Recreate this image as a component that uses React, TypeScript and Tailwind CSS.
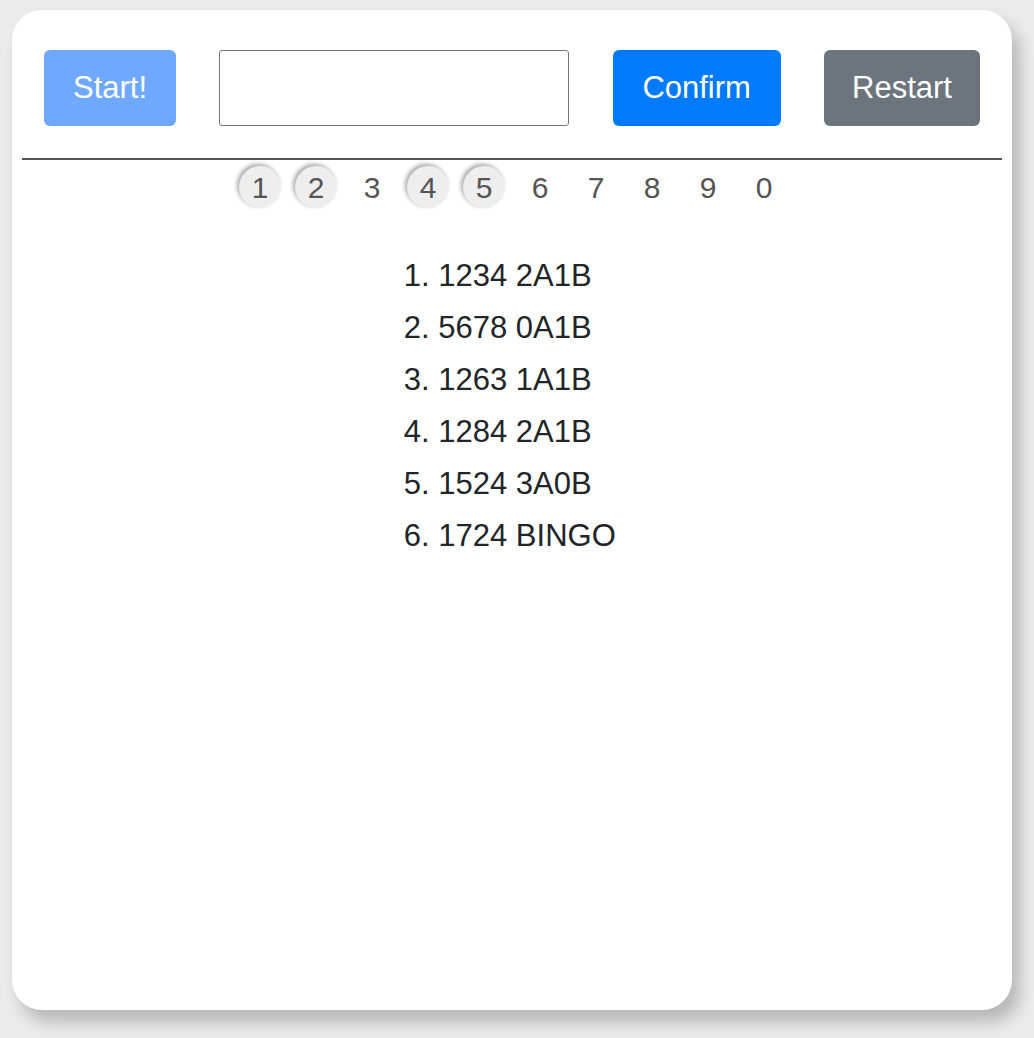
import React from "react";

const digits = ["1", "2", "3", "4", "5", "6", "7", "8", "9", "0"];
const used = ["1", "2", "4", "5"];

const guesses = [
    {num: "1234", result: "2A1B"},
    {num: "5678", result: "0A1B"},
    {num: "1263", result: "1A1B"},
    {num: "1284", result: "2A1B"},
    {num: "1524", result: "3A0B"},
    {num: "1724", result: "BINGO"},
];

const App: React.FC = () => {
    return (
        <div className="min-h-[1038px] w-full bg-[#ebebeb] pt-[10px] pl-[12px] font-['Liberation_Sans',Helvetica,Arial,sans-serif]">
            <div className="w-[1000px] h-[1000px] rounded-[30px] bg-white shadow-[8px_12px_16px_rgba(0,0,0,0.22)] pt-[40px]">
                <div className="flex items-center justify-between px-[32px]">
                    <button
                        disabled
                        className="w-[132px] h-[76px] rounded-[6px] bg-[#6fa8ff] text-white text-[31px]"
                    >
                        Start!
                    </button>
                    <input
                        type="text"
                        className="w-[350px] h-[76px] border border-[#767676] rounded-[3px] bg-white focus:outline-none"
                    />
                    <button className="w-[168px] h-[76px] rounded-[6px] bg-[#007bff] text-white text-[31px]">
                        Confirm
                    </button>
                    <button className="w-[156px] h-[76px] rounded-[6px] bg-[#6c757d] text-white text-[31px]">
                        Restart
                    </button>
                </div>
                <div className="mt-[32px] mx-[10px] h-[2px] bg-[#555]"/>
                <div className="mt-[5px] flex justify-center">
                    {digits.map((d) => (
                        <div key={d} className="w-[56px] h-[44px] flex items-center justify-center">
                            <span
                                className={
                                    used.includes(d)
                                        ? "w-[42px] h-[42px] rounded-full bg-[#eeeeee] shadow-[-2px_-2px_4px_rgba(0,0,0,0.35)] flex items-center justify-center text-[30px] text-[#555]"
                                        : "w-[42px] h-[42px] flex items-center justify-center text-[30px] text-[#555]"
                                }
                            >
                                {d}
                            </span>
                        </div>
                    ))}
                </div>
                <ol className="mt-[41px] mx-auto w-fit pl-[30px] list-decimal text-[31px] leading-[52px] text-[#212529]">
                    {guesses.map((g, i) => (
                        <li key={i}>
                            {g.num} {g.result}
                        </li>
                    ))}
                </ol>
            </div>
        </div>
    );
};

export default App;
